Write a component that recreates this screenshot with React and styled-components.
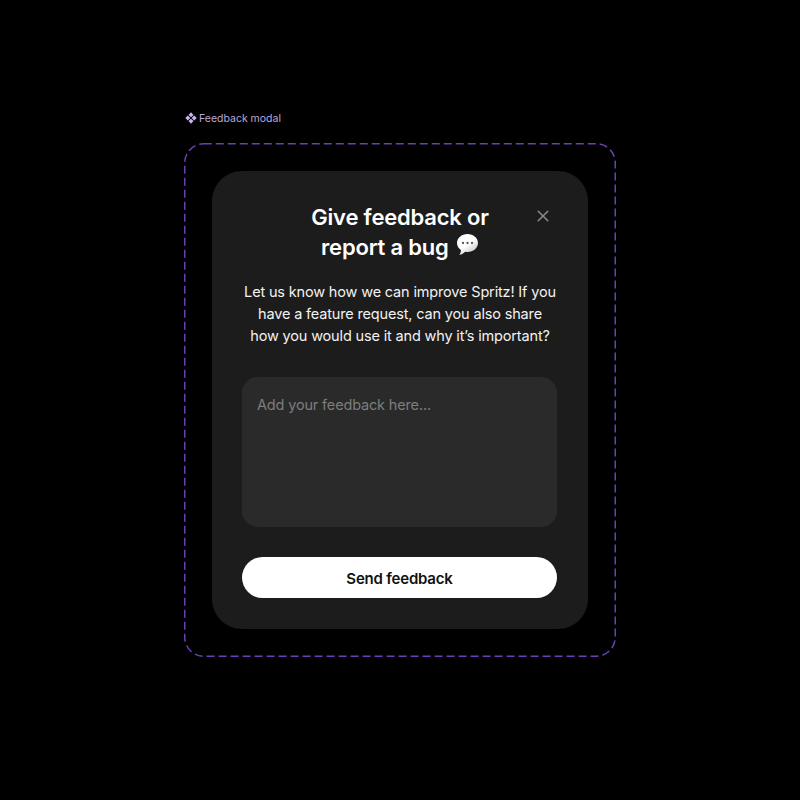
import React from "react";
import styled, { createGlobalStyle } from "styled-components";

const Global = createGlobalStyle`
  html, body { margin: 0; padding: 0; background: #000; }
  body { font-family: Inter, "Liberation Sans", sans-serif; }
`;

const Page = styled.main`
  width: 800px;
  height: 800px;
  box-sizing: border-box;
  padding-top: 110px;
  background: #000;
  display: flex;
  flex-direction: column;
  align-items: center;
`;

const Section = styled.section`
  width: 432px;
  display: flex;
  flex-direction: column;
  gap: 17px;
`;

const ComponentLabel = styled.div`
  height: 16px;
  display: flex;
  align-items: center;
  gap: 2px;
  padding-left: 1px;
  color: #bba8dd;
  font-size: 10.5px;
  font-weight: 400;
`;

const Frame = styled.div`
  position: relative;
  padding: 28px;
  box-sizing: border-box;
  width: 432px;
  height: 514px;
`;

const DashedOutline = styled.svg`
  position: absolute;
  inset: 0;
  width: 432px;
  height: 514px;
  pointer-events: none;
`;

const Modal = styled.div`
  width: 376px;
  height: 458px;
  box-sizing: border-box;
  background: #1c1c1c;
  border-radius: 30px;
  padding: 31px 30px 30px;
  display: flex;
  flex-direction: column;
  align-items: center;
  color: #fff;
`;

const Header = styled.header`
  position: relative;
  width: 100%;
  display: flex;
  justify-content: center;
`;

const Title = styled.h2`
  margin: 0;
  width: 200px;
  font-size: 22px;
  line-height: 30px;
  font-weight: 600;
  letter-spacing: -0.2px;
  text-align: center;
  color: #fff;
`;

const Emoji = styled.svg`
  display: inline-block;
  width: 24px;
  height: 24px;
  vertical-align: -3px;
  margin-left: 1px;
`;

const CloseButton = styled.button`
  position: absolute;
  top: 6px;
  right: 7px;
  width: 16px;
  height: 16px;
  padding: 0;
  border: 0;
  background: none;
  display: flex;
  color: #8a8a8a;
`;

const Description = styled.p`
  margin: 19px 0 0;
  width: 316px;
  font-size: 14.5px;
  line-height: 22px;
  font-weight: 400;
  letter-spacing: -0.16px;
  text-align: center;
  color: #f2f2f2;
  white-space: nowrap;
`;

const Field = styled.div`
  flex: none;
  align-self: flex-start;
  margin-top: 30.4px;
  width: 315px;
  height: 150px;
  box-sizing: border-box;
  border-radius: 16px;
  background: #2a2a2a;
  padding: 17px 15px;
  font-size: 14.5px;
  line-height: 22px;
  letter-spacing: -0.16px;
  color: #7d7d7d;
`;

const SendButton = styled.button`
  flex: none;
  align-self: flex-start;
  margin-top: 30px;
  width: 315px;
  height: 41px;
  border: 0;
  border-radius: 21px;
  background: #fff;
  color: #111;
  padding: 1px 0 0;
  font-family: inherit;
  font-size: 15px;
  font-weight: 600;
  letter-spacing: -0.2px;
`;

const Diamond = () => (
  <svg width="12" height="12" viewBox="0 0 12 12" fill="#c9b6f0">
    <path d="M6 .3 8.500 2.900 6 5.300 3.500 2.900Z" />
    <path d="M6 6.700 8.500 9.100 6 11.700 3.500 9.100Z" />
    <path d="M.3 6 2.800 3.500 5.300 6 2.800 8.500Z" />
    <path d="M6.700 6 9.200 3.500 11.700 6 9.200 8.500Z" />
  </svg>
);

const Balloon = () => (
  <Emoji viewBox="0 0 24 24" role="img" aria-label="speech balloon">
    <defs>
      <linearGradient id="balloonFill" x1="0.2" y1="0.1" x2="0.85" y2="1">
        <stop offset="0.45" stopColor="#ffffff" />
        <stop offset="1" stopColor="#b9bdc2" />
      </linearGradient>
    </defs>
    <path d="M12.500 0C6.700 0 2 4 2 9c0 2.900 1.500 5.300 3.900 7 .2 1.700-.4 3.300-1.500 4.700 2.300-.2 4.300-1.500 5.800-3 .7.2 1.500.3 2.300.3C18.300 18 23 14 23 9S18.300 0 12.500 0Z" fill="url(#balloonFill)" />
    <circle cx="8" cy="9" r="1.150" fill="#55595e" />
    <circle cx="12.500" cy="9" r="1.150" fill="#55595e" />
    <circle cx="17" cy="9" r="1.150" fill="#55595e" />
  </Emoji>
);

export default function App() {
  return (
    <>
      <Global />
      <Page>
        <Section>
          <ComponentLabel>
            <Diamond />
            Feedback modal
          </ComponentLabel>
          <Frame>
            <DashedOutline viewBox="0 0 432 514" fill="none">
              <rect
                x="0.75"
                y="0.75"
                width="430.5"
                height="512.5"
                rx="19"
                stroke="#6a40b8"
                strokeWidth="1.5"
                strokeDasharray="8 4"
              />
            </DashedOutline>
            <Modal>
              <Header>
                <Title>
                  Give feedback or report a bug <Balloon />
                </Title>
                <CloseButton aria-label="Close">
                  <svg width="16" height="16" viewBox="0 0 16 16" fill="none" stroke="currentColor" strokeWidth="1.5" strokeLinecap="round">
                    <path d="M3.200 3.200 12.800 12.800M12.800 3.200 3.200 12.800" />
                  </svg>
                </CloseButton>
              </Header>
              <Description>
                Let us know how we can improve Spritz! If you
                <br />
                have a feature request, can you also share
                <br />
                how you would use it and why it’s important?
              </Description>
              <Field>Add your feedback here...</Field>
              <SendButton>Send feedback</SendButton>
            </Modal>
          </Frame>
        </Section>
      </Page>
    </>
  );
}
